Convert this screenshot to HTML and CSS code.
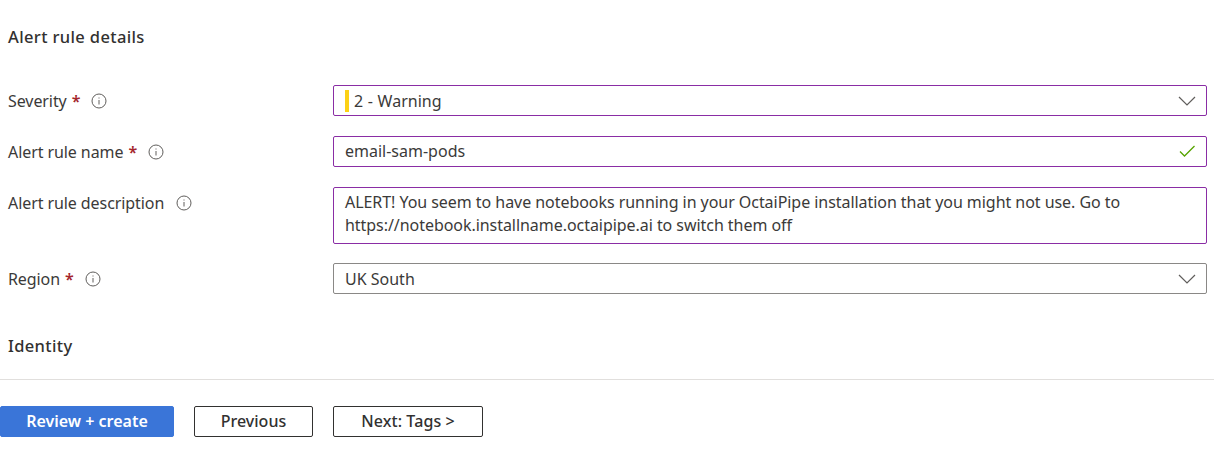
FILE: index.html
```html
<!DOCTYPE html>
<html lang="en">
<head>
<meta charset="utf-8">
<title>Alert rule details</title>
<link rel="stylesheet" href="styles.css">
</head>
<body>
<main class="content">
  <h2 class="section-title first">Alert rule details</h2>
  <div class="form">
    <label class="label">Severity<span class="req">*</span><svg class="info" viewBox="0 0 16 16"><circle cx="8" cy="8" r="7" /><path d="M8 7v4.500M8 4.500v1" /></svg></label>
    <div class="field focus select"><span class="sev-bar"></span><span class="sev-text">2 - Warning</span><svg class="chev" viewBox="0 0 18 10"><path d="M1 1l8 8 8-8" /></svg></div>
    <label class="label">Alert rule name<span class="req">*</span><svg class="info" viewBox="0 0 16 16"><circle cx="8" cy="8" r="7" /><path d="M8 7v4.500M8 4.500v1" /></svg></label>
    <div class="field focus select name-field"><span>email-sam-pods</span><svg class="check" viewBox="0 0 16 12"><path d="M1 6.500l4.500 4.500L15.500 1" /></svg></div>
    <label class="label">Alert rule description<svg class="info wide" viewBox="0 0 16 16"><circle cx="8" cy="8" r="7" /><path d="M8 7v4.500M8 4.500v1" /></svg></label>
    <div class="field focus area">ALERT! You seem to have notebooks running in your OctaiPipe installation that you might not use. Go to https://notebook.installname.octaipipe.ai to switch them off</div>
    <label class="label">Region<span class="req">*</span><svg class="info" viewBox="0 0 16 16"><circle cx="8" cy="8" r="7" /><path d="M8 7v4.500M8 4.500v1" /></svg></label>
    <div class="field select"><span>UK South</span><svg class="chev" viewBox="0 0 18 10"><path d="M1 1l8 8 8-8" /></svg></div>
  </div>
  <h2 class="section-title">Identity</h2>
</main>
<footer class="footer">
  <button class="btn primary">Review + create</button>
  <button class="btn prev">Previous</button>
  <button class="btn next">Next: Tags &gt;</button>
</footer>
</body>
</html>
```
FILE: styles.css
```css
* { box-sizing: border-box; }
html, body { margin: 0; padding: 0; background: #fff; }
body {
  width: 1214px;
  height: 451px;
  overflow: hidden;
  font-family: "Noto Sans", "Open Sans", sans-serif;
  font-size: 16px;
  color: #3b3a39;
}
.content { padding: 0 7px 0 8px; height: 379px; }
.section-title {
  margin: 0;
  font-size: 16.500px;
  font-weight: 500;
  line-height: 22px;
  letter-spacing: 0.36px;
  color: #323130;
}
.section-title.first { padding-top: 26px; margin-bottom: 37px; }
.form {
  display: grid;
  grid-template-columns: 325px 874px;
  row-gap: 20px;
  margin-bottom: 41px;
}
.label {
  display: flex;
  align-items: flex-start;
  height: 31px;
  line-height: 32px;
  white-space: nowrap;
  letter-spacing: -0.08px;
}
.req { color: #a4262c; margin-left: 5px; font-weight: 600; }
.info {
  width: 16px;
  height: 16px;
  margin-top: 8px;
  margin-left: 11px;
  fill: none;
  stroke: #605e5c;
  stroke-width: 1;
}
.info.wide { margin-left: 12px; }
.field {
  border: 1px solid #8a8886;
  border-radius: 2px;
  background: #fff;
  padding: 0 11px;
  line-height: 22px;
}
.field.focus { border-color: #8a2da5; }
.select {
  display: flex;
  align-items: center;
  height: 31px;
}
.name-field { padding-bottom: 2px; }
.area {
  height: 57px;
  margin-bottom: -1px;
  padding-top: 3px;
  padding-bottom: 3px;
  line-height: 23px;
  letter-spacing: -0.05px;
}
.sev-bar { width: 4px; height: 22px; background: #fcd116; margin-right: 5px; }
.sev-text { word-spacing: 0.5px; }
.chev {
  width: 18px;
  height: 10px;
  margin-left: auto;
  margin-right: -1px;
  fill: none;
  stroke: #605e5c;
  stroke-width: 1.200;
}
.check {
  width: 16px;
  height: 12px;
  margin-left: auto;
  fill: none;
  stroke: #57a300;
  stroke-width: 1.300;
}
.footer {
  border-top: 1px solid #e1dfdd;
  padding-top: 26px;
  display: flex;
  gap: 20px;
}
.btn {
  height: 31px;
  border: 1px solid #323130;
  border-radius: 2px;
  background: #fff;
  font: 500 16px/22px "Noto Sans", "Open Sans", sans-serif;
  color: #323130;
  padding: 0 0 2px;
}
.primary { width: 174px; background: #3a75d8; border-color: #3a75d8; color: #fff; font-weight: 600; }
.prev { width: 119px; }
.next { width: 150px; letter-spacing: 0.1px; }
```
